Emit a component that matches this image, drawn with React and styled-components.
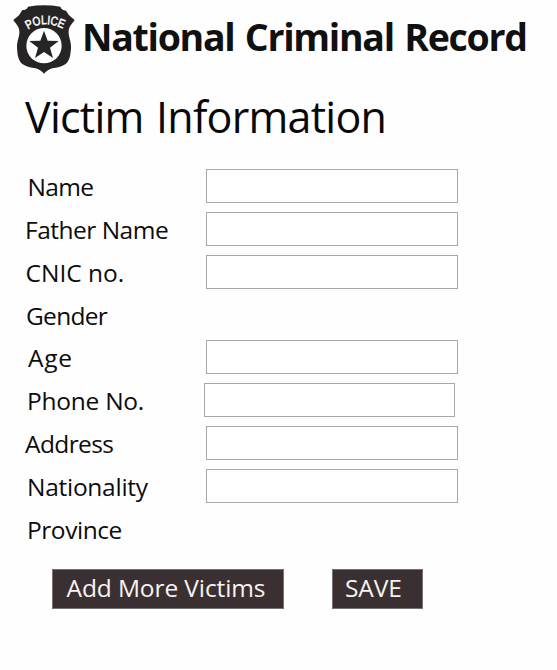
import React from 'react';
import styled, { createGlobalStyle } from 'styled-components';

const GlobalStyle = createGlobalStyle`
  * { box-sizing: border-box; }
  body { margin: 0; background: #fefefe; }
`;

const Page = styled.main`
  width: 557px;
  height: 670px;
  overflow: hidden;
  background: #fefefe;
  color: #0d0d0d;
  font-family: 'Open Sans', 'Noto Sans', sans-serif;
  white-space: nowrap;
`;

const Header = styled.header`
  display: flex;
  align-items: flex-start;
  height: 80px;
`;

const Badge = styled.svg`
  flex: none;
  width: 81px;
  height: 80px;
`;

const Brand = styled.div`
  padding: 7px 0 0 1px;
  font-size: 37.5px;
  line-height: 60px;
  font-weight: 700;
  letter-spacing: -1.3px;
  word-spacing: 2px;
  color: #101010;
`;

const Title = styled.h1`
  margin: 0;
  padding: 7px 0 0 25px;
  height: 89px;
  font-size: 43px;
  line-height: 60px;
  font-weight: 400;
  letter-spacing: -0.75px;
  word-spacing: 2px;
  color: #080808;
`;

const Form = styled.form`
  display: flex;
  flex-direction: column;
  gap: 8.86px;
`;

const Row = styled.div`
  display: grid;
  grid-template-columns: ${(p) => p.$split || 206}px ${(p) => (p.$split ? 251 : 252)}px;
  height: 34px;
`;

const Label = styled.label`
  padding: 1px 0 0 ${(p) => p.$indent}px;
  font-size: 24.5px;
  line-height: 33px;
  letter-spacing: ${(p) => p.$tracking}px;
`;

const Input = styled.input`
  width: 100%;
  height: 34px;
  padding: 0 8px;
  border: 1px solid #a8a8a8;
  border-radius: 0;
  background: #fff;
  font: inherit;
  outline: none;
`;

const Actions = styled.div`
  display: flex;
  gap: 48px;
  padding: 14px 0 0 52px;
`;

const Button = styled.button`
  width: ${(p) => p.$width}px;
  height: 40px;
  padding: 0 0 2px ${(p) => p.$indent}px;
  border: 1px solid #777172;
  border-radius: 0;
  background: #3a3031;
  color: #f7f3f3;
  font-family: inherit;
  font-size: 24.5px;
  line-height: 36px;
  letter-spacing: -0.1px;
  text-align: left;
`;

const fields = [
  { label: 'Name', indent: 27.5, tracking: -0.7, input: true },
  { label: 'Father Name', indent: 25, tracking: -0.5, input: true },
  { label: 'CNIC no.', indent: 25.5, tracking: 0, input: true },
  { label: 'Gender', indent: 26, tracking: -0.7 },
  { label: 'Age', indent: 28, tracking: 0.7, input: true },
  { label: 'Phone No.', indent: 27, tracking: -0.25, input: true, split: 204 },
  { label: 'Address', indent: 25, tracking: -0.6, input: true },
  { label: 'Nationality', indent: 27, tracking: -0.27, input: true },
  { label: 'Province', indent: 27, tracking: -0.45 },
];

function PoliceBadge() {
  return (
    <Badge viewBox="0 0 243 240" role="img" aria-label="Police">
      <path
        fill="#272425"
        d="M67 30 C76 30 82 27 84 20 Q132 12 181 20 C183 27 189 30 198 32 L207 46 L224 60 C216 72 207 79 206 92 C204 108 214 123 213 143 C212 164 209 182 197 192 C185 201 171 202 157 205 C146 208 138 214 132 221 C126 214 118 208 107 205 C93 202 79 201 67 192 C55 182 52 164 51 143 C50 123 60 108 58 92 C57 79 48 72 40 60 L57 46 Z"
      />
      <circle cx="132" cy="137" r="53" fill="#fefefe" />
      <path
        fill="#272425"
        d="M132 92 L143 122 L176 123 L150 143 L159 174 L132 156 L105 174 L114 143 L88 123 L121 122 Z"
      />
      <path id="badge-arc" fill="none" d="M84 89 Q132 57 192 88" />
      <text
        fill="#fefefe"
        fontFamily="Liberation Sans Narrow, Liberation Sans, sans-serif"
        fontSize="37"
        stroke="#fefefe"
        strokeWidth="1.6"
      >
        <textPath href="#badge-arc" textLength="110" lengthAdjust="spacingAndGlyphs">
          POLICE
        </textPath>
      </text>
    </Badge>
  );
}

export default function App() {
  return (
    <>
      <GlobalStyle />
      <Page>
        <Header>
          <PoliceBadge />
          <Brand>National Criminal Record</Brand>
        </Header>
        <Title>Victim Information</Title>
        <Form onSubmit={(e) => e.preventDefault()}>
          {fields.map((f) => (
            <Row key={f.label} $split={f.split}>
              <Label htmlFor={f.label} $indent={f.indent} $tracking={f.tracking}>
                {f.label}
              </Label>
              {f.input && <Input id={f.label} />}
            </Row>
          ))}
          <Actions>
            <Button type="button" $width={232} $indent={13.5}>Add More Victims</Button>
            <Button type="submit" $width={91} $indent={12}>SAVE</Button>
          </Actions>
        </Form>
      </Page>
    </>
  );
}
